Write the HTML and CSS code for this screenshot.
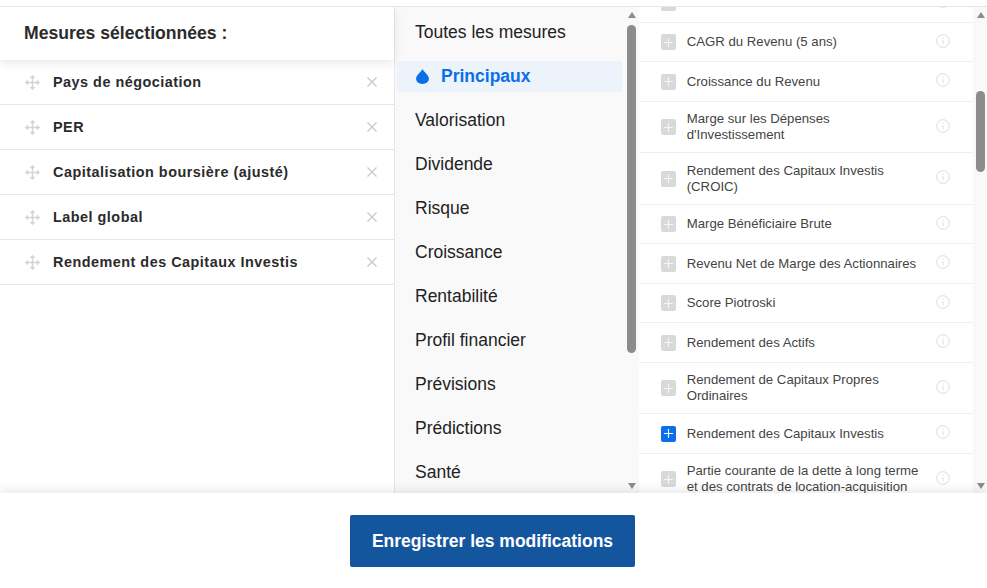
FILE: index.html
```html
<!DOCTYPE html>
<html lang="fr">
<head>
<meta charset="utf-8">
<title>Mesures</title>
<link rel="stylesheet" href="styles.css">
</head>
<body>
<svg class="defs" width="0" height="0" aria-hidden="true">
  <defs>
    <symbol id="move" viewBox="0 0 16 16"><path d="M8 1v14M1 8h14M5.800 3.200 8 1l2.200 2.200M5.800 12.800 8 15l2.200-2.200M3.200 5.800 1 8l2.200 2.200M12.800 5.800 15 8l-2.200 2.200" fill="none" stroke="currentColor" stroke-width="1.500"/></symbol>
    <symbol id="close" viewBox="0 0 10 10"><path d="M.5.5l9 9M9.500.5l-9 9" fill="none" stroke="currentColor" stroke-width="1.200"/></symbol>
    <symbol id="plus" viewBox="0 0 9 9"><path d="M4.500 0v9M0 4.500h9" fill="none" stroke="currentColor" stroke-width="1.200"/></symbol>
    <symbol id="info" viewBox="0 0 14 14"><circle cx="7" cy="7" r="6.300" fill="none" stroke="currentColor" stroke-width="1"/><path d="M7 6v4.200M7 3.600v1.200" fill="none" stroke="currentColor" stroke-width="1"/></symbol>
  </defs>
</svg>
<main class="panels">
  <section class="selected">
    <h2 class="selected-title">Mesures sélectionnées :</h2>
    <ul class="selected-list">
      <li class="selected-row"><svg class="move"><use href="#move"/></svg><span class="selected-name">Pays de négociation</span><svg class="close"><use href="#close"/></svg></li>
      <li class="selected-row"><svg class="move"><use href="#move"/></svg><span class="selected-name">PER</span><svg class="close"><use href="#close"/></svg></li>
      <li class="selected-row"><svg class="move"><use href="#move"/></svg><span class="selected-name">Capitalisation boursière (ajusté)</span><svg class="close"><use href="#close"/></svg></li>
      <li class="selected-row"><svg class="move"><use href="#move"/></svg><span class="selected-name">Label global</span><svg class="close"><use href="#close"/></svg></li>
      <li class="selected-row"><svg class="move"><use href="#move"/></svg><span class="selected-name">Rendement des Capitaux Investis</span><svg class="close"><use href="#close"/></svg></li>
    </ul>
  </section>
  <nav class="categories">
    <ul class="category-list">
      <li class="category">Toutes les mesures</li>
      <li class="category active"><svg class="drop" viewBox="0 0 12 14"><path d="M6 0C5 2.600 0 5.600 0 9.200 0 12 2.700 14 6 14s6-2 6-4.800C12 5.600 7 2.600 6 0z" fill="currentColor"/></svg>Principaux</li>
      <li class="category">Valorisation</li>
      <li class="category">Dividende</li>
      <li class="category">Risque</li>
      <li class="category">Croissance</li>
      <li class="category">Rentabilité</li>
      <li class="category">Profil financier</li>
      <li class="category">Prévisions</li>
      <li class="category">Prédictions</li>
      <li class="category">Santé</li>
    </ul>
    <div class="scrollbar scrollbar-mid">
      <span class="arrow-up"></span>
      <span class="thumb thumb-mid"></span>
      <span class="arrow-down"></span>
    </div>
  </nav>
  <section class="measures">
    <ul class="measure-list">
      <li class="measure measure-cut"><span class="check"><svg class="plus"><use href="#plus"/></svg></span><span class="measure-name"></span><svg class="info"><use href="#info"/></svg></li>
      <li class="measure"><span class="check"><svg class="plus"><use href="#plus"/></svg></span><span class="measure-name">CAGR du Revenu (5 ans)</span><svg class="info"><use href="#info"/></svg></li>
      <li class="measure"><span class="check"><svg class="plus"><use href="#plus"/></svg></span><span class="measure-name">Croissance du Revenu</span><svg class="info"><use href="#info"/></svg></li>
      <li class="measure"><span class="check"><svg class="plus"><use href="#plus"/></svg></span><span class="measure-name">Marge sur les Dépenses d'Investissement</span><svg class="info"><use href="#info"/></svg></li>
      <li class="measure"><span class="check"><svg class="plus"><use href="#plus"/></svg></span><span class="measure-name">Rendement des Capitaux Investis (CROIC)</span><svg class="info"><use href="#info"/></svg></li>
      <li class="measure"><span class="check"><svg class="plus"><use href="#plus"/></svg></span><span class="measure-name">Marge Bénéficiaire Brute</span><svg class="info"><use href="#info"/></svg></li>
      <li class="measure"><span class="check"><svg class="plus"><use href="#plus"/></svg></span><span class="measure-name">Revenu Net de Marge des Actionnaires</span><svg class="info"><use href="#info"/></svg></li>
      <li class="measure"><span class="check"><svg class="plus"><use href="#plus"/></svg></span><span class="measure-name">Score Piotroski</span><svg class="info"><use href="#info"/></svg></li>
      <li class="measure"><span class="check"><svg class="plus"><use href="#plus"/></svg></span><span class="measure-name">Rendement des Actifs</span><svg class="info"><use href="#info"/></svg></li>
      <li class="measure"><span class="check"><svg class="plus"><use href="#plus"/></svg></span><span class="measure-name">Rendement de Capitaux Propres Ordinaires</span><svg class="info"><use href="#info"/></svg></li>
      <li class="measure"><span class="check on"><svg class="plus"><use href="#plus"/></svg></span><span class="measure-name">Rendement des Capitaux Investis</span><svg class="info"><use href="#info"/></svg></li>
      <li class="measure"><span class="check"><svg class="plus"><use href="#plus"/></svg></span><span class="measure-name">Partie courante de la dette à long terme et des contrats de location-acquisition</span><svg class="info"><use href="#info"/></svg></li>
    </ul>
    <div class="scrollbar scrollbar-right">
      <span class="arrow-up"></span>
      <span class="thumb thumb-right"></span>
      <span class="arrow-down"></span>
    </div>
  </section>
</main>
<footer class="footer">
  <button class="save" type="button">Enregistrer les modifications</button>
</footer>
</body>
</html>
```
FILE: styles.css
```css
* { box-sizing: border-box; }
html, body { margin: 0; height: 100%; }
body {
  width: 987px;
  height: 588px;
  overflow: hidden;
  background: #fff;
  font-family: "Liberation Sans", Arial, sans-serif;
  padding-top: 6px;
  display: flex;
  flex-direction: column;
}
ul { list-style: none; margin: 0; padding: 0; }
.defs { display: block; height: 0; }

.panels {
  flex: none;
  height: 487px;
  display: flex;
  border-top: 1px solid #e6e6e6;
  overflow: hidden;
}

.selected {
  flex: none;
  width: 395px;
  border-right: 1px solid #e6e6e6;
  display: flex;
  flex-direction: column;
}
.selected-title {
  flex: none;
  height: 53px;
  margin: 0;
  padding: 16px 24px 0;
  font-size: 17.600px;
  line-height: 20px;
  font-weight: 700;
  color: #2b2b2b;
  background: #fff;
  box-shadow: 0 3px 10px rgba(0, 0, 0, .09);
  position: relative;
}
.selected-row {
  height: 45px;
  display: flex;
  align-items: center;
  padding: 0 17px 0 25px;
  border-bottom: 1px solid #e6e6e6;
}
.move { width: 15px; height: 15px; color: #d4d4d4; flex: none; }
.selected-name {
  flex: 1;
  margin-left: 13px;
  font-size: 14.400px;
  line-height: 18px;
  font-weight: 700;
  letter-spacing: .5px;
  color: #2b2b2b;
}
.close { width: 10px; height: 10px; color: #c8c8c8; flex: none; }

.categories {
  flex: none;
  width: 244px;
  display: flex;
  background: #f9f9f9;
}
.category-list { flex: none; width: 231px; padding: 3px 4px 0 2px; }
.category {
  height: 44px;
  display: flex;
  align-items: center;
  padding: 0 0 0 18px;
  font-size: 17.500px;
  color: #222;
}
.category.active {
  height: 31px;
  margin: 7px 0 6px;
  padding-left: 19px;
  background: #edf3fa;
  border-radius: 2px;
  color: #0a6fe8;
  font-weight: 700;
}
.drop { width: 13px; height: 15px; margin-right: 12px; flex: none; }

.scrollbar {
  flex: none;
  display: flex;
  flex-direction: column;
  align-items: center;
}
.scrollbar-mid { width: 13px; padding: 0 3px 0 1px; }
.scrollbar-right { width: 14px; background: #f9f9f9; padding-left: 3px; padding-right: 2px; }
.arrow-up, .arrow-down {
  width: 0;
  height: 0;
  border-left: 4.500px solid transparent;
  border-right: 4.500px solid transparent;
  flex: none;
}
.arrow-up { margin-top: 5px; border-bottom: 6px solid #8c8c8c; }
.arrow-down { margin-top: auto; margin-bottom: 4px; border-top: 6px solid #8c8c8c; }
.thumb { flex: none; background: #8c8c8c; border-radius: 5px; }
.thumb-mid { width: 9px; height: 328px; margin-top: 7px; }
.thumb-right { width: 9px; height: 81px; margin-top: 73px; }

.measures {
  flex: 1;
  display: flex;
  overflow: hidden;
  min-width: 0;
}
.measure-list { flex: 1; min-width: 0; margin-top: -23.600px; }
.measure {
  min-height: 39.500px;
  display: flex;
  align-items: center;
  padding: 9.250px 23px 9.250px 22px;
  border-bottom: 1px solid #eee;
}
.measure-cut { height: 39.500px; }
.check {
  flex: none;
  width: 15px;
  height: 16px;
  background: #d9d9d9;
  border-radius: 2px;
  display: flex;
  align-items: center;
  justify-content: center;
  color: #fff;
}
.check .plus { opacity: .75; }
.check.on { background: #0a6fe8; }
.check.on .plus { opacity: 1; }
.plus { width: 9px; height: 9px; display: block; }
.measure-name {
  flex: 1;
  margin-left: 10.700px;
  margin-right: 14px;
  font-size: 13.200px;
  line-height: 16px;
  color: #444;
}
.info { width: 14px; height: 14px; margin-top: -3px; color: #dcdcdc; flex: none; }

.footer {
  flex: none;
  height: 95px;
  display: flex;
  justify-content: center;
  padding: 22px 2px 0 0;
  background: #fff;
  box-shadow: 0 -3px 10px rgba(0, 0, 0, .09);
  position: relative;
}
.save {
  width: 285px;
  height: 52px;
  border: 0;
  border-radius: 2px;
  background: #14569e;
  color: #fff;
  font-family: inherit;
  font-size: 17.500px;
  font-weight: 700;
  padding: 0;
}
```
